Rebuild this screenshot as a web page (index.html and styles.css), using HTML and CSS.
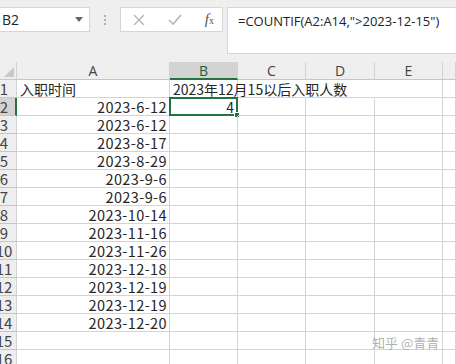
FILE: index.html
```html
<!DOCTYPE html>
<html lang="zh-CN">
<head>
<meta charset="UTF-8" />
<title>COUNTIF</title>
<link rel="stylesheet" href="styles.css">
</head>
<body>
<div class="toolbar">
  <div class="name-box">
    <span>B2</span>
    <svg class="caret" width="8" height="5" viewBox="0 0 8 5"><path d="M0 0 L8 0 L4 5 Z" fill="#666"/></svg>
  </div>
  <div class="grip"><i></i><i></i><i></i></div>
  <div class="fx-box">
    <svg width="12" height="12" viewBox="0 0 12 12"><path d="M1 1 L11 11 M11 1 L1 11" stroke="#b5b5b5" stroke-width="1.4" fill="none"/></svg>
    <svg width="14" height="12" viewBox="0 0 14 12"><path d="M1 6 L5 10 L13 1" stroke="#b5b5b5" stroke-width="1.6" fill="none"/></svg>
    <span class="fx"><i>f</i><sub>x</sub></span>
  </div>
  <div class="formula">=COUNTIF(A2:A14,"&gt;2023-12-15")</div>
</div>

<div class="sheet">
  <div class="corner"><svg width="10" height="10" viewBox="0 0 10 10"><path d="M10 0 L10 10 L0 10 Z" fill="#c8c8c8"/></svg></div>
  <div class="col-head">A</div>
  <div class="col-head active">B</div>
  <div class="col-head">C</div>
  <div class="col-head">D</div>
  <div class="col-head">E</div>
  <div class="col-head"></div>
</div>

<div class="watermark">知乎 @青青</div>

<script>
  var rows = [
    ['入职时间', '2023年12月15以后入职人数'],
    ['2023-6-12', '4'],
    ['2023-6-12'], ['2023-8-17'], ['2023-8-29'], ['2023-9-6'], ['2023-9-6'],
    ['2023-10-14'], ['2023-11-16'], ['2023-11-26'], ['2023-12-18'],
    ['2023-12-19'], ['2023-12-19'], ['2023-12-20'], [], []
  ];
  var sheet = document.querySelector('.sheet');
  rows.forEach(function (r, i) {
    var n = i + 1;
    var html = '<div class="row-head' + (n === 2 ? ' active' : '') + '"><span>' + n + '</span></div>';
    var a = r[0] || '';
    html += '<div class="cell' + (n === 1 ? ' text' : ' date') + '">' + a + '</div>';
    if (n === 2) {
      html += '<div class="cell selected">' + r[1] + '<i class="handle"></i></div>';
    } else {
      html += '<div class="cell text">' + (r[1] || '') + '</div>';
    }
    html += '<div class="cell' + (n === 1 ? ' hidden-line' : '') + '"></div><div class="cell' + (n === 1 ? ' hidden-line' : '') + '"></div><div class="cell"></div><div class="cell"></div>';
    sheet.insertAdjacentHTML('beforeend', html);
  });
</script>
</body>
</html>
```

FILE: styles.css
```css
* {
  box-sizing: border-box;
}
body {
  margin: 0;
  width: 456px;
  height: 364px;
  overflow: hidden;
  background: #fff;
  font-family: "Noto Sans CJK SC", "Noto Sans", sans-serif;
  color: #262626;
  position: relative;
}

/* formula bar */
.toolbar {
  height: 62px;
  background: #efefef;
  display: flex;
  align-items: flex-start;
  padding-top: 7px;
}
.name-box {
  width: 90px;
  height: 25px;
  background: #fff;
  border: 1px solid #d6d6d6;
  border-left: none;
  display: flex;
  align-items: center;
  justify-content: space-between;
  padding: 0 6px 0 2px;
  font-family: "Open Sans", sans-serif;
  font-size: 14px;
  color: #222;
}
.grip {
  width: 30px;
  height: 25px;
  display: flex;
  flex-direction: column;
  align-items: center;
  justify-content: center;
  gap: 2px;
}
.grip i {
  width: 2px;
  height: 2px;
  background: #b0b0b0;
}
.fx-box {
  width: 103px;
  height: 25px;
  background: #fff;
  border: 1px solid #d6d6d6;
  display: flex;
  align-items: center;
  justify-content: space-between;
  padding: 0 8px 0 12px;
}
.fx {
  font-family: "Liberation Serif", serif;
  font-size: 15px;
  color: #555;
}
.fx sub {
  font-size: 10px;
  vertical-align: 0;
}
.formula {
  margin-left: 4px;
  flex: 1;
  height: 47px;
  background: #fff;
  border: 1px solid #d6d6d6;
  border-right: none;
  padding: 4px 0 0 10px;
  font-family: "Open Sans", sans-serif;
  font-size: 13px;
  color: #222;
}

/* grid */
.sheet {
  display: grid;
  grid-template-columns: 17px 153px 68px 68px 69px 68px 13px;
  grid-auto-rows: 18px;
}
.corner,
.col-head,
.row-head {
  background: #eeeeee;
  border-right: 1px solid #d2d2d2;
  border-bottom: 1px solid #c6c6c6;
  color: #444;
  font-size: 14px;
  line-height: 17px;
}
.corner {
  display: flex;
  align-items: flex-end;
  justify-content: flex-end;
  padding: 0 2px 2px 0;
}
.col-head {
  text-align: center;
  font-family: "Open Sans", sans-serif;
}
.col-head.active {
  background: #d3d3d3;
  border-bottom: 2px solid #217346;
  color: #1e5a37;
}
.row-head {
  overflow: hidden;
  font-size: 15px;
  line-height: 18px;
}
.row-head span {
  display: block;
  width: 20px;
  margin-left: -6px;
  text-align: center;
}
.row-head.active {
  background: #d3d3d3;
  border-right: 2px solid #217346;
}
.cell {
  border-right: 1px solid #d4d4d4;
  border-bottom: 1px solid #d4d4d4;
  font-size: 14px;
  line-height: 18px;
  text-align: right;
  padding: 0 3px;
  white-space: nowrap;
  position: relative;
}
.cell.date {
  font-size: 14.5px;
  letter-spacing: 0.4px;
  padding-right: 2px;
}
.cell.text {
  text-align: left;
}
.cell.hidden-line {
  border-right-color: transparent;
}
.cell.selected {
  border: 2px solid #217346;
  margin: -1px 0 0 -1px;
  line-height: 16px;
  padding-right: 2px;
}
.handle {
  position: absolute;
  right: -4px;
  bottom: -4px;
  width: 6px;
  height: 6px;
  background: #217346;
  border: 1px solid #fff;
}
.watermark {
  position: absolute;
  left: 372px;
  top: 333px;
  font-size: 13px;
  color: rgba(150, 150, 150, 0.75);
  text-shadow: 0 0 2px #fff;
}
```
